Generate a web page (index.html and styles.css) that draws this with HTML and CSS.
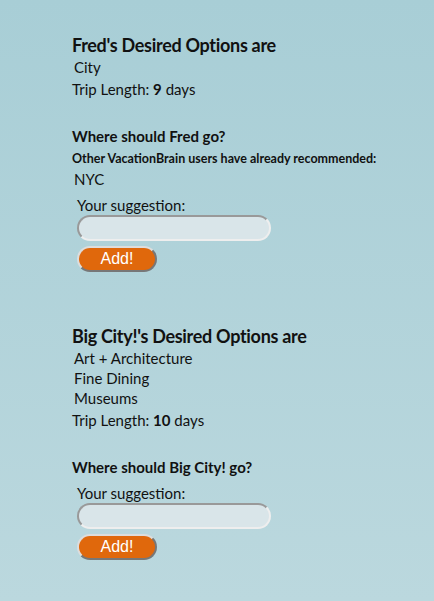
FILE: index.html
```html
<!DOCTYPE html>
<html>
<head>
<meta charset="utf-8">
<link rel="stylesheet" href="styles.css">
</head>
<body>
<div class="page">
  <section class="trip">
    <h2 class="title">Fred's Desired Options are</h2>
    <ul class="options">
      <li>City</li>
    </ul>
    <p class="length">Trip Length: <b>9</b> days</p>
    <h3 class="where">Where should Fred go?</h3>
    <p class="others">Other VacationBrain users have already recommended:</p>
    <ul class="options">
      <li>NYC</li>
    </ul>
    <form class="suggest">
      <label class="label">Your suggestion:</label>
      <input class="field" type="text">
      <button class="add" type="button">Add!</button>
    </form>
  </section>
  <section class="trip">
    <h2 class="title">Big City!'s Desired Options are</h2>
    <ul class="options">
      <li>Art + Architecture</li>
      <li>Fine Dining</li>
      <li>Museums</li>
    </ul>
    <p class="length">Trip Length: <b>10</b> days</p>
    <h3 class="where">Where should Big City! go?</h3>
    <form class="suggest">
      <label class="label">Your suggestion:</label>
      <input class="field" type="text">
      <button class="add" type="button">Add!</button>
    </form>
  </section>
</div>
</body>
</html>
```
FILE: styles.css
```css
html, body {
  margin: 0;
  padding: 0;
}
body {
  min-height: 601px;
  background: linear-gradient(to bottom, #a8ced6, #bbd8de);
  font-family: Lato, "Noto Sans", sans-serif;
  color: #111;
}
.page {
  padding: 33px 0 0 72px;
  display: flex;
  flex-direction: column;
  gap: 52px;
}
.trip {
  display: flex;
  flex-direction: column;
}
.title {
  margin: 0;
  font-size: 18px;
  font-weight: 700;
  letter-spacing: -0.3px;
  line-height: 24px;
}
.options {
  list-style: none;
  margin: 0;
  padding: 0 0 0 2px;
  font-size: 15px;
  line-height: 20px;
}
.length {
  margin: 2px 0 0;
  font-size: 15px;
  line-height: 20px;
}
.length b { font-weight: 700; }
.where {
  margin: 27px 0 0;
  font-size: 15px;
  font-weight: 700;
  line-height: 20px;
}
.others {
  margin: 3px 0 0;
  font-size: 12.5px;
  font-weight: 700;
  line-height: 20px;
}
.suggest {
  display: flex;
  flex-direction: column;
  align-items: flex-start;
  padding-left: 5px;
  margin-top: 7px;
}
.label {
  font-size: 15px;
  line-height: 19px;
}
.field {
  width: 194px;
  height: 26px;
  box-sizing: border-box;
  margin: 0;
  background: #d9e5e9;
  border: 2px solid;
  border-color: #999 #eee #eee #999;
  border-radius: 13px;
  outline: none;
}
.add {
  margin-top: 5px;
  width: 80px;
  height: 26px;
  box-sizing: border-box;
  background: #e0680c;
  color: #fff;
  font-family: "Liberation Sans", Arial, sans-serif;
  font-size: 16px;
  border: 2px solid;
  border-color: #ddd #777 #777 #ddd;
  border-radius: 13px;
  padding: 0;
}
```
